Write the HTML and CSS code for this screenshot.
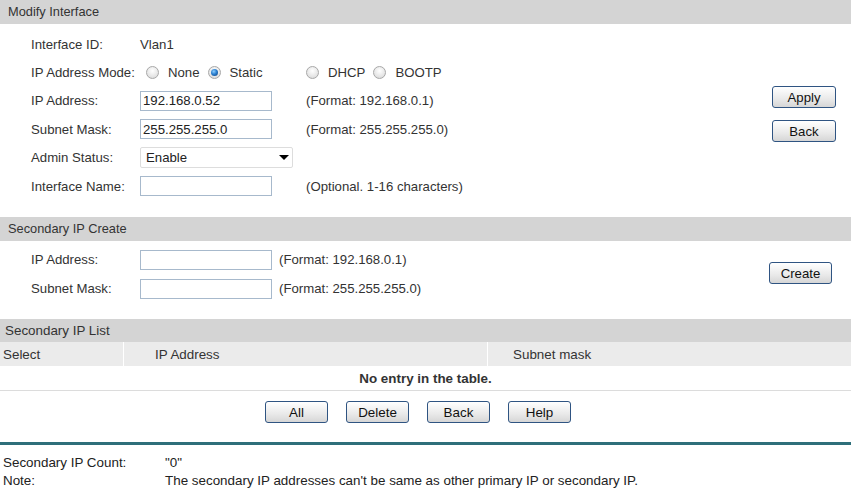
FILE: index.html
```html
<!DOCTYPE html>
<html>
<head>
    <title>Modify Interface</title>
    <link rel="stylesheet" href="styles.css">
</head>
<body>
    <!-- Modify Interface -->
    <div class="bar">Modify Interface</div>
    <div class="section sec-modify">
        <div class="form form-modify">
            <span class="label">Interface ID:</span>
            <span class="field">Vlan1</span>
            <span class="hint"></span>

            <span class="label">IP Address Mode:</span>
            <span class="field">
                <span class="radio"></span><span class="opt">None</span>
                <span class="radio on"></span><span class="opt">Static</span>
            </span>
            <span class="hint">
                <span class="radio"></span><span class="opt">DHCP</span>
                <span class="radio"></span><span class="opt">BOOTP</span>
            </span>

            <span class="label">IP Address:</span>
            <span class="field"><input class="txt" type="text" value="192.168.0.52"></span>
            <span class="hint">(Format: 192.168.0.1)</span>

            <span class="label">Subnet Mask:</span>
            <span class="field"><input class="txt" type="text" value="255.255.255.0"></span>
            <span class="hint">(Format: 255.255.255.0)</span>

            <span class="label">Admin Status:</span>
            <span class="field"><span class="select"><select><option>Enable</option><option>Disable</option></select></span></span>
            <span class="hint"></span>

            <span class="label">Interface Name:</span>
            <span class="field"><input class="txt" type="text" value=""></span>
            <span class="hint">(Optional. 1-16 characters)</span>
        </div>
        <div class="actions act-modify">
            <button class="btn">Apply</button>
            <button class="btn">Back</button>
        </div>
    </div>

    <!-- Secondary IP Create -->
    <div class="bar">Secondary IP Create</div>
    <div class="section sec-create">
        <div class="form form-create">
            <span class="label">IP Address:</span>
            <span class="field"><input class="txt" type="text" value=""></span>
            <span class="hint">(Format: 192.168.0.1)</span>

            <span class="label">Subnet Mask:</span>
            <span class="field"><input class="txt" type="text" value=""></span>
            <span class="hint">(Format: 255.255.255.0)</span>
        </div>
        <div class="actions act-create">
            <button class="btn">Create</button>
        </div>
    </div>

    <!-- Secondary IP List -->
    <div class="bar narrow">Secondary IP List</div>
    <table class="list narrow">
        <tr class="head">
            <td class="c1">Select</td>
            <td class="c2">IP Address</td>
            <td class="c3">Subnet mask</td>
        </tr>
        <tr class="empty">
            <td colspan="3">No entry in the table.</td>
        </tr>
    </table>
    <div class="list-btns narrow">
        <button class="btn">All</button>
        <button class="btn">Delete</button>
        <button class="btn">Back</button>
        <button class="btn">Help</button>
    </div>

    <div class="rule"></div>
    <div class="info narrow">
        <span class="ilabel">Secondary IP Count:</span>
        <span>"0"</span>
        <span class="ilabel">Note:</span>
        <span>The secondary IP addresses can't be same as other primary IP or secondary IP.</span>
    </div>
</body>
</html>
```

FILE: styles.css
```css
body {
    margin: 0;
    background: #ffffff;
    color: #333333;
    font-family: "Liberation Sans", Arial, sans-serif;
    font-size: 13.2px;
}

.narrow {
    font-family: "Liberation Sans Narrow", "Arial Narrow", "Liberation Sans", sans-serif;
    font-size: 13.4px;
}

.bar {
    background: #d4d4d4;
    height: 24px;
    line-height: 24px;
    padding-left: 8px;
    color: #333;
    font-size: 12.8px;
}

.bar.narrow {
    padding-left: 5px;
    height: 23px;
    line-height: 23px;
    font-size: 13.4px;
}

/* sections */
.section {
    display: flex;
}

.sec-modify {
    padding: 6px 0 17px 0;
}

.sec-create {
    padding: 4px 0 16px 0;
}

.form {
    display: grid;
    align-items: center;
    padding-left: 31px;
}

.form-modify {
    grid-template-columns: 109px 166px 300px;
    grid-auto-rows: 28.4px;
}

.form-create {
    grid-template-columns: 109px 139px 300px;
    grid-auto-rows: 29px;
}

.field,
.hint {
    display: flex;
    align-items: center;
    white-space: nowrap;
}

.radio {
    width: 11px;
    height: 11px;
    border: 1px solid #a8a8a8;
    border-radius: 50%;
    background: radial-gradient(circle at 50% 35%, #ffffff 0%, #e2e2e2 70%, #cfcfcf 100%);
    position: relative;
    margin-right: 9px;
}

.field .radio:first-child {
    margin-left: 6px;
}

.radio.on::after {
    content: '';
    position: absolute;
    left: 2px;
    top: 2px;
    width: 7px;
    height: 7px;
    border-radius: 50%;
    background: radial-gradient(circle at 40% 35%, #8fd0ff 0%, #2a7fd0 45%, #123e78 100%);
}

.opt {
    margin-right: 8px;
}

.txt {
    width: 132px;
    height: 20px;
    box-sizing: border-box;
    border: 1px solid #a7b9cc;
    padding: 0 2px;
    margin: 0;
    font-family: "Liberation Sans", Arial, sans-serif;
    font-size: 13.2px;
    color: #222;
    outline: none;
}

.select {
    position: relative;
    display: inline-block;
}

.select select {
    -webkit-appearance: none;
    appearance: none;
    width: 153px;
    height: 21px;
    border: 1px solid #dddddd;
    border-radius: 2px;
    background: #fff;
    padding: 0 0 0 5px;
    margin: 0;
    font-family: "Liberation Sans", Arial, sans-serif;
    font-size: 13.2px;
    color: #222;
}

.select::after {
    content: '';
    position: absolute;
    right: 4px;
    top: 8px;
    border-left: 5px solid transparent;
    border-right: 5px solid transparent;
    border-top: 5px solid #000;
    pointer-events: none;
}

/* buttons */
.btn {
    width: 64px;
    height: 22px;
    box-sizing: border-box;
    border: 1px solid #2f5482;
    border-radius: 3px;
    background: linear-gradient(#ffffff, #e9e9e9 60%, #d6d6d6);
    color: #111;
    font-family: inherit;
    font-size: 13.2px;
    padding: 0;
}

.narrow .btn {
    font-size: 13.4px;
    width: 63px;
}

.actions {
    display: flex;
    flex-direction: column;
    gap: 12px;
    margin-left: auto;
}

.act-modify {
    padding-top: 56px;
    margin-right: 15px;
}

.act-create {
    padding-top: 17px;
    margin-right: 19px;
}

.act-create .btn {
    width: 63px;
}

/* list */
.list {
    width: 100%;
    border-collapse: collapse;
    color: #333;
}

.list td {
    height: 24px;
    padding: 0;
}

.list .head td {
    background: #ebebeb;
    border-left: 1px solid #ffffff;
}

.list .head .c1 {
    width: 120px;
    padding-left: 3px;
    border-left: none;
}

.list .head .c2 {
    width: 332px;
    padding-left: 31px;
}

.list .head .c3 {
    padding-left: 25px;
}

.list .empty td {
    text-align: center;
    font-weight: bold;
    border-bottom: 1px solid #dcdcdc;
}

.list-btns {
    display: flex;
    gap: 18px;
    padding: 10px 0 0 265px;
}

.rule {
    height: 3px;
    background: #2e6f7a;
    margin-top: 19px;
}

.info {
    display: grid;
    grid-template-columns: 162px auto;
    grid-auto-rows: 18px;
    align-items: center;
    padding: 8px 0 0 3px;
    color: #222;
}
```
